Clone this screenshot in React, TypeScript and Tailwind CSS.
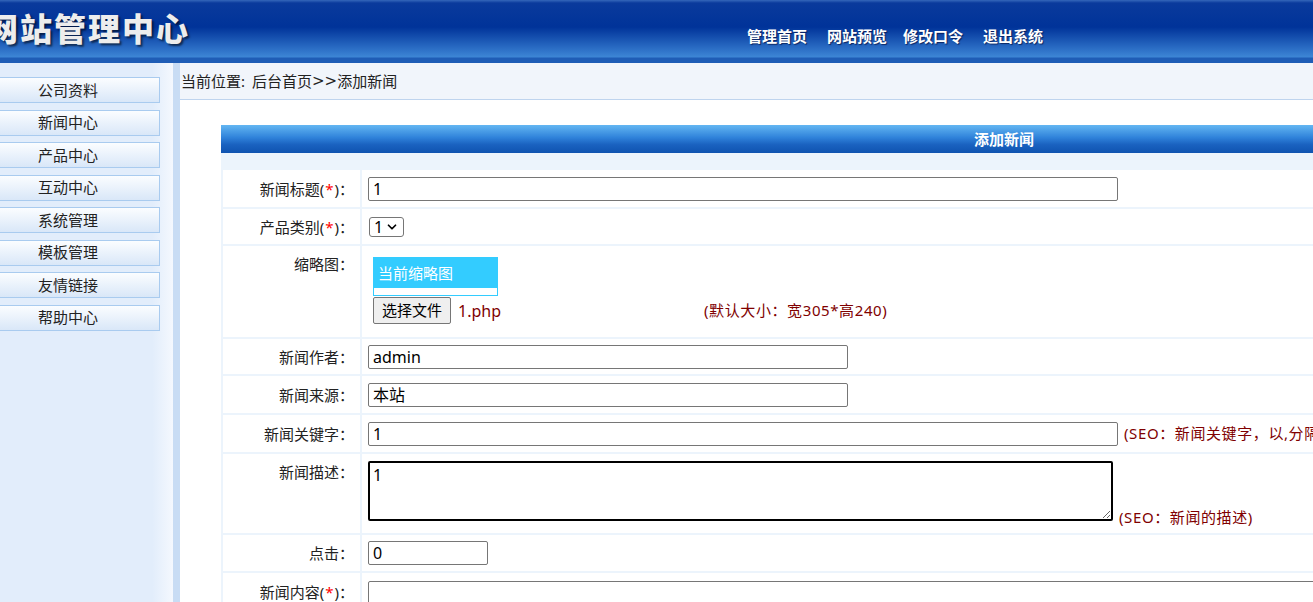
import { ChevronDown } from "lucide-react";

const menu = ["公司资料", "新闻中心", "产品中心", "互动中心", "系统管理", "模板管理", "友情链接", "帮助中心"];

const Star = () => <span className="px-[1px] text-[#ff0000]">*</span>;

const Label = ({ children, top }: { children: React.ReactNode; top?: string }) => (
  <div
    className={`flex w-[137px] shrink-0 justify-end bg-white pr-[6px] leading-[20px] ${
      top ? `items-start ${top}` : "items-center"
    }`}
  >
    <span>{children}</span>
  </div>
);

const TextInput = ({ value, width }: { value: string; width: string }) => (
  <input
    readOnly
    defaultValue={value}
    className={`h-[24px] ${width} rounded-[2px] border border-[#767676] bg-white px-[4px] text-[16px] text-black outline-none`}
  />
);

export default function App() {
  return (
    <div className="flex h-[602px] w-[1313px] flex-col overflow-hidden bg-white font-['Noto_Sans','Noto_Sans_CJK_SC',sans-serif] text-[15px] text-[#222]">
      {/* top banner */}
      <header className="flex h-[63px] shrink-0 items-start bg-[linear-gradient(to_bottom,#3567ba_0px,#0a3a9c_3px,#003399_27px,#2a6cc4_48px,#3d86d5_57px,#1f5db6_58px,#1f5db6_63px)]">
        <div className="-ml-[14px] w-[204px] shrink-0 pt-[13px] text-[32px] leading-[32px] font-black tracking-[2px] whitespace-nowrap text-[#ededed] [text-shadow:2px_2px_2px_rgba(0,0,0,0.55)]">
          网站管理中心
        </div>
        <nav className="ml-[557px] flex pt-[26px] text-[15px] leading-[20px] font-bold whitespace-nowrap text-white [text-shadow:1px_1px_1px_rgba(0,0,40,0.6)]">
          <span>管理首页</span>
          <span className="ml-[20px]">网站预览</span>
          <span className="ml-[16px]">修改口令</span>
          <span className="ml-[20px]">退出系统</span>
        </nav>
      </header>

      <div className="flex min-h-0 flex-1">
        {/* left menu */}
        <aside className="flex w-[173px] shrink-0 flex-col gap-[6.5px] overflow-hidden bg-[linear-gradient(to_right,#e2edfb_88%,#f4f8fe)] pt-[14px]">
          {menu.map((m) => (
            <div
              key={m}
              className="-ml-[24px] flex h-[26px] w-[184px] shrink-0 items-center justify-center border border-[#a9cbef] bg-[linear-gradient(to_bottom,#fbfdff,#d9e7f8)] text-[15px] text-[#222]"
            >
              {m}
            </div>
          ))}
        </aside>
        <div className="w-[7px] shrink-0 bg-[#c8dcf4]" />

        {/* main */}
        <main className="min-w-0 flex-1 overflow-hidden">
          <div className="flex h-[37px] items-center border-b border-[#bfd4ee] bg-[#f1f5fb] pl-[1px] whitespace-nowrap text-[#222]">
            当前位置:<span className="ml-[7px]">后台首页</span>
            <span className="font-['DejaVu_Sans',sans-serif]">&gt;&gt;</span>
            <span>添加新闻</span>
          </div>

          <div className="mt-[25px] ml-[41px] w-[1566px] bg-[#ecf4fc]">
            <div className="flex h-[28px] items-center justify-center bg-[linear-gradient(to_bottom,#63b6f2,#2f82da_45%,#1a62c0_70%,#0f53b0)] text-[15px] font-bold text-white">
              添加新闻
            </div>
            <div className="h-[17px]" />

            <div className="flex flex-col gap-[2px] pl-[2px]">
              <div className="flex h-[37px] gap-[2px]">
                <Label>
                  新闻标题(<Star />)：
                </Label>
                <div className="flex flex-1 items-center bg-white pl-[6px]">
                  <TextInput value="1" width="w-[750px]" />
                </div>
              </div>

              <div className="flex h-[35px] gap-[2px]">
                <Label>
                  产品类别(<Star />)：
                </Label>
                <div className="flex flex-1 items-center bg-white pl-[7px]">
                  <div className="flex h-[20px] w-[35px] items-center justify-between rounded-[3px] border border-[#767676] px-[4px] text-[16px] text-black">
                    <span>1</span>
                    <ChevronDown className="size-[14px]" strokeWidth={3} />
                  </div>
                </div>
              </div>

              <div className="flex h-[91px] gap-[2px]">
                <Label top="pt-[8px]">缩略图：</Label>
                <div className="flex flex-1 flex-col items-start bg-white pt-[11px] pl-[11px]">
                  <div className="w-[125px] border border-[#33ccff] bg-[#33ccff]">
                    <div className="h-[30px] pl-[4px] leading-[30px] text-white">当前缩略图</div>
                    <div className="h-[7px] bg-white" />
                  </div>
                  <div className="mt-[1px] flex items-center">
                    <div className="flex h-[27px] w-[78px] items-center justify-center rounded-[2px] border border-[#767676] bg-[#efefef] text-black">
                      选择文件
                    </div>
                    <span className="ml-[7px] w-[246px] text-[16px] text-[#800000]">1.php</span>
                    <span className="tracking-[0.6px] text-[#800000]">(默认大小：宽305*高240)</span>
                  </div>
                </div>
              </div>

              <div className="flex h-[35px] gap-[2px]">
                <Label>新闻作者：</Label>
                <div className="flex flex-1 items-center bg-white pl-[6px]">
                  <TextInput value="admin" width="w-[480px]" />
                </div>
              </div>

              <div className="flex h-[37px] gap-[2px]">
                <Label>新闻来源：</Label>
                <div className="flex flex-1 items-center bg-white pl-[6px]">
                  <TextInput value="本站" width="w-[480px]" />
                </div>
              </div>

              <div className="flex h-[37px] gap-[2px]">
                <Label>新闻关键字：</Label>
                <div className="flex flex-1 items-center bg-white pl-[6px] whitespace-nowrap">
                  <TextInput value="1" width="w-[750px]" />
                  <span className="ml-[6px] tracking-[0.6px] text-[#800000]">(SEO：新闻关键字，以,分隔)</span>
                </div>
              </div>

              <div className="flex h-[79px] gap-[2px]">
                <Label top="pt-[8px]">新闻描述：</Label>
                <div className="flex flex-1 items-start bg-white pt-[7px] pl-[6px] whitespace-nowrap">
                  <textarea
                    autoFocus
                    defaultValue="1"
                    className="block h-[60px] w-[745px] rounded-[2px] border-2 border-black bg-white px-[3px] pt-[2px] text-[16px] leading-[20px] text-black outline-none"
                  />
                  <span className="mt-[45px] ml-[6px] tracking-[0.6px] text-[#800000]">(SEO：新闻的描述)</span>
                </div>
              </div>

              <div className="flex h-[36px] gap-[2px]">
                <Label>点击：</Label>
                <div className="flex flex-1 items-center bg-white pl-[6px]">
                  <TextInput value="0" width="w-[120px]" />
                </div>
              </div>

              <div className="flex h-[60px] gap-[2px]">
                <Label top="pt-[9px]">
                  新闻内容(<Star />)：
                </Label>
                <div className="flex flex-1 items-start bg-white pt-[8px] pl-[6px]">
                  <div className="h-[60px] w-[1100px] rounded-[2px] border border-[#767676]" />
                </div>
              </div>
            </div>
          </div>
        </main>
      </div>
    </div>
  );
}
